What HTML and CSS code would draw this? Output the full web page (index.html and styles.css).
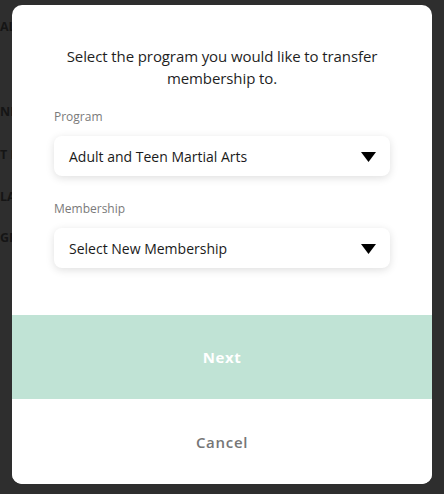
FILE: index.html
```
<!DOCTYPE html>
<html lang="en">
<head>
<meta charset="utf-8">
<title>Transfer Membership</title>
<link rel="stylesheet" href="styles.css">
</head>
<body>
<div class="backdrop">
  <div class="bg-item bg-1">ALL</div>
  <div class="bg-item bg-2">NEXT</div>
  <div class="bg-item bg-3">T PAY</div>
  <div class="bg-item bg-4">LAST</div>
  <div class="bg-item bg-5">GRAD</div>
</div>
<div class="modal">
  <div class="modal-body">
    <p class="title">Select the program you would like to transfer membership to.</p>
    <div class="field">
      <div class="label">Program</div>
      <div class="select">
        <span>Adult and Teen Martial Arts</span>
        <svg class="caret" width="15" height="10" viewBox="0 0 15 10"><path d="M0 0H15L7.5 10Z" fill="#000"/></svg>
      </div>
    </div>
    <div class="field">
      <div class="label">Membership</div>
      <div class="select">
        <span>Select New Membership</span>
        <svg class="caret" width="15" height="10" viewBox="0 0 15 10"><path d="M0 0H15L7.5 10Z" fill="#000"/></svg>
      </div>
    </div>
  </div>
  <button class="btn-next">Next</button>
  <button class="btn-cancel">Cancel</button>
</div>
</body>
</html>
```
FILE: styles.css
```
html, body {
  margin: 0;
  padding: 0;
  height: 100%;
}
body {
  background: #2e2e2e;
  font-family: "Open Sans", "Noto Sans", sans-serif;
  overflow: hidden;
}
.backdrop {
  display: flex;
  flex-direction: column;
  align-items: flex-start;
  padding-top: 20px;
  font-family: "Open Sans", sans-serif;
  font-weight: 700;
  font-size: 12.5px;
  color: #151515;
  line-height: 14px;
  white-space: nowrap;
}
.bg-item { height: 14px; }
.bg-2 { margin-top: 71px; }
.bg-3 { margin-top: 29px; }
.bg-4 { margin-top: 28px; }
.bg-5 { margin-top: 27px; }

.modal {
  position: absolute;
  left: 12px;
  top: 5px;
  width: 420px;
  height: 479px;
  background: #fff;
  border-radius: 10px;
  overflow: hidden;
  display: flex;
  flex-direction: column;
}
.modal-body {
  padding: 40px 42px 0;
  flex: 1;
}
.title {
  margin: 0 0 20px;
  text-align: center;
  font-size: 15px;
  letter-spacing: -0.1px;
  line-height: 22px;
  color: #1f1f1f;
}
.field + .field { margin-top: 25px; }
.label {
  font-size: 12px;
  line-height: 16px;
  color: #7a7a7a;
  margin-bottom: 11px;
}
.select {
  height: 40px;
  border-radius: 8px;
  background: #fff;
  box-shadow: 0 2px 9px rgba(0, 0, 0, 0.13);
  display: flex;
  align-items: center;
  justify-content: space-between;
  padding: 0 14px 0 15px;
  font-size: 14px;
  color: #1a1a1a;
}
.caret { display: block; margin-top: 1px; }
button {
  border: 0;
  font-family: "Open Sans", sans-serif;
  font-size: 15px;
  cursor: pointer;
  width: 100%;
}
.btn-next {
  height: 84px;
  background: #c0e3d5;
  color: #fff;
  font-weight: 700;
  letter-spacing: 0.6px;
}
.btn-cancel {
  height: 85px;
  background: #fff;
  color: #767676;
  font-weight: 600;
  letter-spacing: 0.7px;
}
```
